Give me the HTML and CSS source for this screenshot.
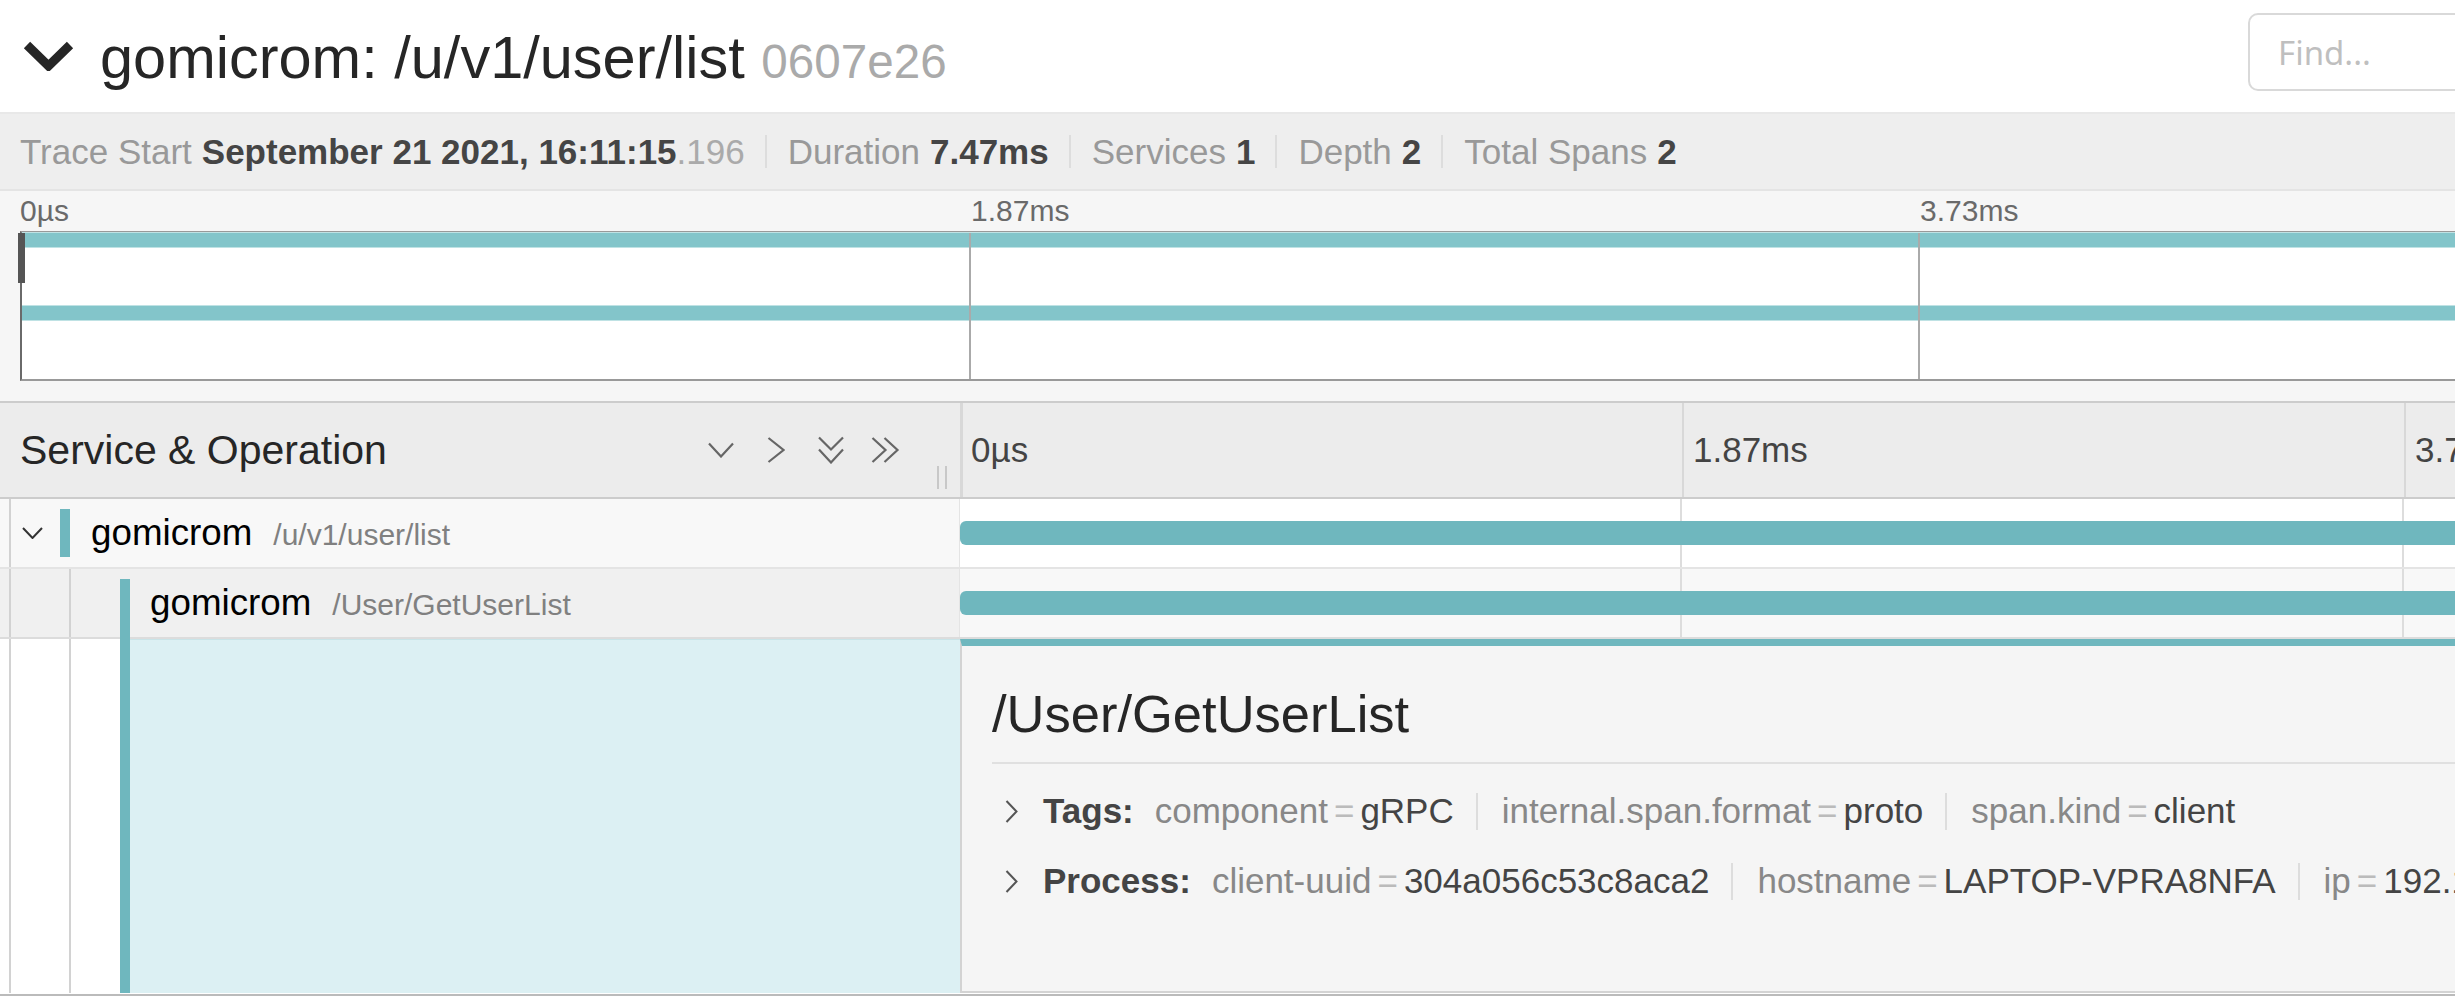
FILE: index.html
```html
<!DOCTYPE html>
<html lang="en">
<head>
<meta charset="utf-8">
<title>gomicrom: /u/v1/user/list</title>
<link rel="stylesheet" href="styles.css">
</head>
<body>
<div class="app">
  <header class="title-row">
    <div class="title-link">
      <svg class="detail-toggle" viewBox="0 0 51 30" width="51" height="30"><polyline points="4,4 25.5,25 47,4"/></svg>
      <h1 class="title">gomicrom: /u/v1/user/list <small class="trace-id">0607e26</small></h1>
    </div>
    <div class="search"><input class="find" type="text" placeholder="Find..."></div>
  </header>

  <ul class="overview">
    <li class="ov-item"><span class="ov-label">Trace Start</span><strong class="ov-value">September 21 2021, 16:11:15<span class="ov-detail">.196</span></strong></li>
    <li class="ov-item"><span class="ov-label">Duration</span><strong class="ov-value">7.47ms</strong></li>
    <li class="ov-item"><span class="ov-label">Services</span><strong class="ov-value">1</strong></li>
    <li class="ov-item"><span class="ov-label">Depth</span><strong class="ov-value">2</strong></li>
    <li class="ov-item"><span class="ov-label">Total Spans</span><strong class="ov-value">2</strong></li>
  </ul>

  <section class="minimap">
    <div class="mm-ticks">
      <span class="mm-tick">0µs</span>
      <span class="mm-tick">1.87ms</span>
      <span class="mm-tick last">3.73ms</span>
    </div>
    <div class="mm-graph">
      <div class="mm-row"><div class="mm-bar"></div></div>
      <div class="mm-row"><div class="mm-bar"></div></div>
      <div class="mm-handle"></div>
    </div>
  </section>

  <section class="timeline">
    <div class="tl-row tl-header">
      <div class="name-col hdr-left">
        <h3 class="hdr-title">Service &amp; Operation</h3>
        <span class="hdr-action"><svg width="26" height="16" viewBox="0 0 26 16"><polyline points="1,1.5 13,14.5 25,1.5"/></svg></span>
        <span class="hdr-action"><svg width="18" height="26" viewBox="0 0 18 26"><polyline points="1.5,1 16.5,13 1.5,25"/></svg></span>
        <span class="hdr-action"><svg width="26" height="28" viewBox="0 0 26 28"><polyline points="1,1.5 13,13.5 25,1.5"/><polyline points="1,13.5 13,26.5 25,13.5"/></svg></span>
        <span class="hdr-action"><svg width="29" height="26" viewBox="0 0 29 26"><polyline points="1.5,1 14.5,13 1.5,25"/><polyline points="13.5,1 26.5,13 13.5,25"/></svg></span>
        <span class="resizer"></span>
      </div>
      <div class="view-col hdr-ticks">
        <span class="hdr-tick">0µs</span>
        <span class="hdr-tick">1.87ms</span>
        <span class="hdr-tick">3.73ms</span>
      </div>
    </div>

    <div class="tl-row span-row">
      <div class="name-col">
        <span class="indent toggle"><svg width="21" height="12" viewBox="0 0 21 12"><polyline points="1,1 10.5,11 20,1"/></svg></span>
        <span class="color-bar"></span>
        <span class="span-name"><span class="svc">gomicrom</span><span class="endpoint">/u/v1/user/list</span></span>
      </div>
      <div class="view-col"><div class="span-bar"></div></div>
    </div>

    <div class="tl-row span-row expanded">
      <div class="name-col">
        <span class="indent"></span>
        <span class="indent"></span>
        <span class="color-bar"></span>
        <span class="span-name child"><span class="svc">gomicrom</span><span class="endpoint">/User/GetUserList</span></span>
      </div>
      <div class="view-col"><div class="span-bar"></div></div>
    </div>

    <div class="tl-row detail-row">
      <div class="name-col">
        <span class="indent"></span>
        <span class="indent"></span>
        <span class="color-bar full"></span>
        <span class="accent-fill"></span>
      </div>
      <div class="view-col detail-panel">
        <h2 class="op-name">/User/GetUserList</h2>
        <hr class="divider">
        <div class="kv-row">
          <svg class="kv-chevron" width="13" height="23" viewBox="0 0 13 23"><polyline points="1.5,1 11.5,11.5 1.5,22"/></svg>
          <span class="kv-title">Tags:</span>
          <span class="kv"><span class="kv-key">component</span><span class="kv-eq">=</span><span class="kv-val">gRPC</span></span>
          <span class="kv-sep"></span>
          <span class="kv"><span class="kv-key">internal.span.format</span><span class="kv-eq">=</span><span class="kv-val">proto</span></span>
          <span class="kv-sep"></span>
          <span class="kv"><span class="kv-key">span.kind</span><span class="kv-eq">=</span><span class="kv-val">client</span></span>
        </div>
        <div class="kv-row">
          <svg class="kv-chevron" width="13" height="23" viewBox="0 0 13 23"><polyline points="1.5,1 11.5,11.5 1.5,22"/></svg>
          <span class="kv-title">Process:</span>
          <span class="kv"><span class="kv-key">client-uuid</span><span class="kv-eq">=</span><span class="kv-val">304a056c53c8aca2</span></span>
          <span class="kv-sep"></span>
          <span class="kv"><span class="kv-key">hostname</span><span class="kv-eq">=</span><span class="kv-val">LAPTOP-VPRA8NFA</span></span>
          <span class="kv-sep"></span>
          <span class="kv"><span class="kv-key">ip</span><span class="kv-eq">=</span><span class="kv-val">192.168.1.6</span></span>
        </div>
      </div>
    </div>
    <div class="tl-footer"></div>
  </section>
</div>
</body>
</html>
```

FILE: styles.css
```css
* { box-sizing: border-box; }

html, body {
  margin: 0;
  padding: 0;
  overflow: hidden;
  background: #fff;
}

body {
  font-family: "Liberation Sans", Arial, Helvetica, sans-serif;
  font-size: 35px;
  color: #262626;
}

.app { width: 100%; }

/* ---------- title row ---------- */
.title-row {
  display: flex;
  align-items: center;
  height: 114px;
  padding-left: 23px;
  margin-right: -213px;
  border-bottom: 2px solid #e8e8e8;
  background: #fff;
}

.title-link {
  display: flex;
  align-items: center;
  flex: 1;
  min-width: 0;
  color: #262626;
}

.detail-toggle { flex: none; }
.detail-toggle polyline {
  fill: none;
  stroke: #262626;
  stroke-width: 9;
}

.title {
  margin: 4px 0 0 26px;
  font-size: 59.5px;
  font-weight: normal;
  line-height: 1;
  white-space: nowrap;
}

.trace-id {
  font-size: 80%;
  color: #aaa;
}

.search {
  flex: none;
  width: 420px;
  align-self: flex-start;
  margin-top: 13px;
}

.find {
  display: block;
  width: 100%;
  height: 78px;
  padding: 0 28px;
  border: 2px solid #d9d9d9;
  border-radius: 10px;
  background: #fff;
  font-family: "Noto Sans", "Open Sans", sans-serif;
  font-size: 33px;
  color: #333;
  outline: none;
}
.find::placeholder { color: #bfbfbf; }

/* ---------- overview items ---------- */
.overview {
  display: flex;
  margin: 0;
  padding: 10px 20px;
  list-style: none;
  background: #eee;
  border-bottom: 2px solid #e4e4e4;
  line-height: 55px;
  white-space: nowrap;
}

.ov-item {
  display: flex;
  align-items: center;
}
.ov-item:not(:last-child)::after {
  content: "";
  width: 2px;
  height: 33px;
  margin: 0 21px 0 20px;
  background: #ddd;
}

.ov-label {
  color: #999;
  margin-right: 10px;
}
.ov-value {
  color: #454545;
  font-weight: bold;
}
.ov-detail {
  color: #aaa;
  font-weight: normal;
}

/* ---------- minimap ---------- */
.minimap {
  padding: 0 0 20px 20px;
  background: #f6f6f6;
  border-bottom: 2px solid #ccc;
  overflow: hidden;
}

.mm-ticks {
  display: flex;
  height: 40px;
  line-height: 40px;
  font-size: 30px;
  color: #6a6a6a;
  white-space: nowrap;
}
.mm-tick {
  flex: none;
  width: 949px;
}
.mm-tick + .mm-tick { padding-left: 2px; }
.mm-tick.last { width: auto; }

.mm-graph {
  position: relative;
  width: 3796px;
  height: 150px;
  background: #fff;
  border-top: 2px solid #999;
  border-bottom: 2px solid #999;
  border-left: 2px solid #6a6a6a;
}
.mm-graph::after {
  content: "";
  position: absolute;
  top: 0;
  right: 0;
  bottom: 0;
  left: 0;
  background: repeating-linear-gradient(90deg, transparent 0 947px, #aaa 947px 949px);
}

.mm-row { height: 73px; }

.mm-bar {
  height: 14px;
  background: #83c5ca;
  box-shadow: 0 1px 0 #bfe2e4, 0 -1px 0 #bfe2e4;
}

.mm-handle {
  position: absolute;
  left: -4px;
  top: 0;
  width: 7px;
  height: 50px;
  background: #555;
}

/* ---------- timeline ---------- */
.timeline { overflow: hidden; }

.tl-row {
  display: flex;
  width: 3848px;
}

.name-col {
  flex: 0 0 960px;
  display: flex;
}

.view-col { flex: 0 0 2888px; }

.tl-header {
  height: 96px;
  background: #ececec;
  border-bottom: 2px solid #ccc;
}

.hdr-left {
  align-items: center;
  padding: 0 13px 0 20px;
}

.hdr-title {
  flex: 1;
  margin: 0;
  font-size: 41px;
  font-weight: normal;
  color: #262626;
  white-space: nowrap;
}

.hdr-action {
  display: flex;
  justify-content: center;
  width: 55px;
}
.hdr-action polyline {
  fill: none;
  stroke: #666;
  stroke-width: 2.2;
}

.resizer {
  align-self: flex-end;
  width: 10px;
  height: 23px;
  margin: 0 0 8px 24px;
  border-left: 2px solid #c8c8c8;
  border-right: 2px solid #c8c8c8;
}

.hdr-ticks { display: flex; }

.hdr-tick {
  display: flex;
  align-items: center;
  flex: none;
  width: 722px;
  padding-left: 9px;
  border-left: 2px solid #d8d8d8;
  color: #444;
  white-space: nowrap;
}
.hdr-tick:first-child {
  border-left-width: 3px;
  padding-left: 8px;
}

/* span rows */
.span-row {
  height: 70px;
  border-bottom: 2px solid #e4e4e4;
}

.span-row .name-col {
  background: #f8f8f8;
  border-right: 1px solid #e4e4e4;
}

.span-row .view-col {
  display: flex;
  align-items: center;
  background: #fff repeating-linear-gradient(90deg, transparent 0 720px, #ddd 720px 722px);
}

.span-row.expanded { border-bottom-color: #dcdcdc; }
.span-row.expanded .name-col { background: #f0f0f0; }
.span-row.expanded .view-col { background-color: #f8f8f8; }

.indent {
  flex: 0 0 60px;
  background: linear-gradient(90deg, transparent 9px, #d2d2d2 9px 11px, transparent 11px);
}

.indent.toggle {
  display: flex;
  align-items: center;
  padding-left: 22px;
}
.indent.toggle polyline {
  fill: none;
  stroke: #333;
  stroke-width: 2;
}

.color-bar {
  flex: 0 0 10px;
  margin: 10px 0;
  background: #6fb7be;
}
.expanded .color-bar { margin: 10px 0 -2px; }
.color-bar.full { margin: 0; }

.span-name {
  padding-left: 21px;
  line-height: 68px;
  white-space: nowrap;
}
.span-name.child { padding-left: 20px; }

.svc {
  font-size: 36.75px;
  color: #000;
}

.endpoint {
  margin-left: 21px;
  font-size: 30px;
  color: #808080;
}

.span-bar {
  width: 100%;
  height: 24px;
  background: #6fb7be;
  border-radius: 6px 0 0 6px;
}

/* detail row */
.detail-row { height: 354px; }

.detail-row .name-col { background: #fff; }

.accent-fill {
  flex: 1;
  background: #dcf0f3;
  border-top: 1px solid #c9e4e8;
}

.detail-panel {
  padding: 30px 30px 0;
  background: #f5f5f5;
  border-top: 7px solid #6fb7be;
  border-left: 2px solid #d3d3d3;
  border-bottom: 2px solid #d3d3d3;
}

.op-name {
  margin: 0;
  font-size: 52.5px;
  font-weight: normal;
  line-height: 76px;
  color: #262626;
}

.divider {
  height: 2px;
  margin: 10px 0 12px;
  border: 0;
  background: #e0e0e0;
}

.kv-row {
  display: flex;
  align-items: center;
  height: 70px;
  white-space: nowrap;
}

.kv-chevron {
  flex: none;
  margin: 0 25px 0 13px;
}
.kv-chevron polyline {
  fill: none;
  stroke: #555;
  stroke-width: 2;
}

.kv-title {
  margin-right: 21px;
  font-weight: bold;
  color: #444;
}

.kv-key { color: #888; }
.kv-eq {
  margin: 0 6px;
  color: #bbb;
}
.kv-val { color: #444; }

.kv-sep {
  flex: none;
  width: 2px;
  height: 37px;
  margin: 0 24px 0 22px;
  background: #ddd;
}

.tl-footer {
  height: 3px;
  border-top: 1px solid #fff;
  background: #bbb;
}
```
